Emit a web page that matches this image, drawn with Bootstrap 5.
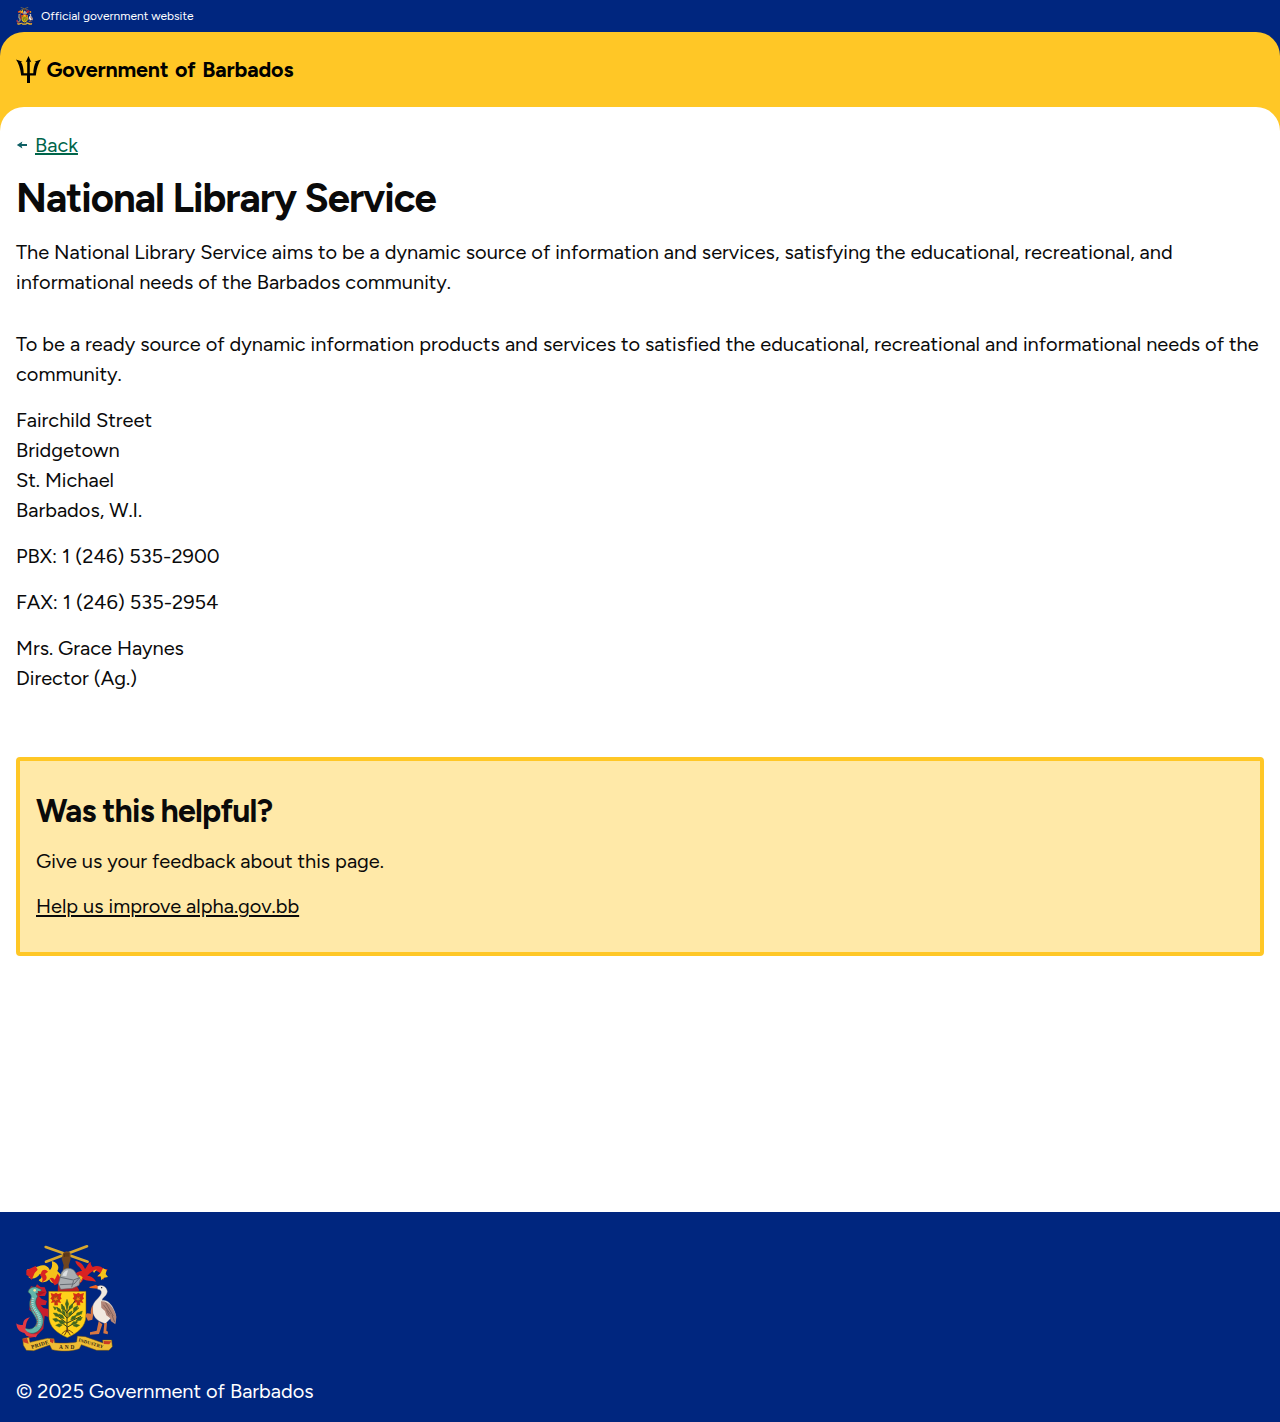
<!DOCTYPE html>
<html lang="en">
<head>
<meta charset="utf-8">
<meta name="viewport" content="width=device-width, initial-scale=1">
<title>National Library Service</title>
<link href="https://cdn.jsdelivr.net/npm/bootstrap@5.3.0/dist/css/bootstrap.min.css" rel="stylesheet">
<style>
body{font-family:Figtree,Lato,sans-serif;font-size:20px;line-height:30px;color:#0a0a0a;background:#fff}
.official-bar{background:#00267f;height:32px;font-size:12px;line-height:16px;gap:8px}
.blue-back{background:#00267f}
.yellow-back{background:#ffc726}
.brand-bar{background:#ffc726;height:75px;border-radius:24px 24px 0 0;font-size:21.5px;font-weight:700;letter-spacing:-.15px;word-spacing:1.6px;color:#000;gap:5.5px}
.sheet{background:#fff;border-radius:24px 24px 0 0;padding-top:23px;height:1105px}
.back-row{gap:8px;height:30px}
.back-row a{color:#00654a;text-underline-offset:1px;text-decoration-thickness:2px}
h1{font-size:40px;line-height:46px;font-weight:700;letter-spacing:-.025em;margin:15px 0 16px}
.summary{margin-bottom:32px}
.helpful{margin-top:64px;border:4px solid #ffc726;border-radius:4px;background:#ffe9a8;height:199px;padding:30px 16px}
.helpful h2{font-size:32px;line-height:40px;font-weight:700;letter-spacing:-.025em;margin-bottom:15px}
.helpful p{margin-bottom:15px}
.helpful a{color:#0a0a0a;text-underline-offset:2px;text-decoration-thickness:2px}
.site-foot{background:#00267f;height:210px;padding-top:32px}
.site-foot p{margin:24px 0 0}
</style>
</head>
<body>
<svg width="0" height="0" class="position-absolute" aria-hidden="true">
<symbol id="arms" viewBox="18 24 303 324">
  <g stroke="#d9a82e" stroke-width="8" stroke-linecap="round"><path d="M107 33 233 77"/><path d="M231 31 108 77"/></g>
  <path d="M160 50q10-9 21 0l1 20-6 18 4 30h-24l5-30-6-20z" fill="#70451f"/><path d="M163 53v10m5-12v11m6-11v11" stroke="#3c2612" stroke-width="2"/>
  <path d="M149 134C137 148 121 142 118 130 108 141 92 142 86 132 96 128 98 119 90 113 82 126 66 133 55 123 67 115 56 106 51 99 66 102 74 94 86 91 101 83 116 91 119 102 126 98 128 87 125 75 142 79 150 92 142 105L153 116z" fill="#f5c21a"/>
  <path d="M49 103 77 90 83 101 74 111 65 132 56 121 49 117zM96 104q11-6 18 3l-9 7q8 8 3 17l-13 9q7-16-5-22zM119 127q10-5 15 4l9-18 9 13q-4 18-18 22z" fill="#d92222"/>
  <path d="M186 130C188 115 204 104 216 105 210 91 198 89 196 75 212 76 221 89 225 99 233 92 232 82 242 78 242 94 254 97 261 98 249 105 240 108 232 120 243 119 253 127 258 137 243 134 229 135 220 130 213 145 198 151 183 145z" fill="#d92222"/>
  <path d="M239 102C249 86 270 86 283 100L293 99 285 113 281 132 274 121 262 122 271 112C261 101 251 102 239 111z" fill="#d92222"/>
  <path d="M279 97 290 102 287 114 294 123 282 125 274 133 272 121 262 121 272 111zM197 126l12-9 9 7-6 13-9 4zM249 105l11-5-8 11z" fill="#f5c21a"/>
  <path d="M144 142q14 16 52 1l12 20-10 10h-55z" fill="#be1f22"/>
  <path d="M151 123q2-22 20-26 21-2 28 18l12 15-4 18-20 9-35 3-7-17z" fill="#aaaeb1" stroke="#65696d" stroke-width="2"/>
  <path d="M151 124l39 8 19-7-17 19-42 2m41-13-6 21" fill="none" stroke="#666c72" stroke-width="3"/><path d="M157 119q4-14 17-16l-5 18z" fill="#dce0e2"/>
  <path d="M116 166H228V239C228 272 202 292 172 305 141 292 116 272 116 239z" fill="#ffd11a" stroke="#6c4e13" stroke-width="1.5"/>
  <g id="bloom"><path d="M122 171l10 3 6-4 6 4 11-3-3 11 3 6-6 4 4 9-10-2 1 9h-11v-9l-10 2 4-9-6-4 4-6z" fill="#d62d16"/><path d="M132 179l5 6 7-6-2 9 6 4-9 1-1 6-4-7-7-1 6-4zM137 199v8" stroke="#8d4a12" stroke-width="2" fill="#f07e12"/></g>
  <use href="#bloom" x="67"/>
  <path d="M171 198v88m0-14-24-18m24 8-36-28m36 12-30-32m30 18-16-28m16 70 30-17m-30 4 42-20m-42 6 36-32m-36 15 24-36" fill="none" stroke="#36401a" stroke-width="3"/>
  <path d="M171 190l5 14-5 14-5-14zM154 206l9 6 1 12-9-5zM187 203l1 11-11 8v-10zM140 214l10 5 4 11-11-5zM203 209l-2 11-11 7 1-11zM130 231l11 1 8 8-12 1zM214 227l-4 9-13 4 4-9zM146 234l12 4 5 10-12-3zM199 238l-4 10-13 4 4-10zM128 249l11-2 9 7-12 3zM217 244l-5 9-14 2 6-9zM145 254l12-1 8 8-12 3zM203 257l-7 8-13 1 7-9zM137 268l10-5 10 4-9 6zM209 268l-9 5-11-4 10-5zM157 222l8 6 1 11-9-6zM186 225l-1 10-9 6v-10zM135 222l-5-10 9 3zM205 231l12-6-3 10z" fill="#41661f" stroke="#41661f" stroke-width="1.5"/>
  <path d="M172 274v15m0-6q-9 1-17 11m17-12-9 16m9-15 9 15m-9-17q8 2 18 11" stroke="#6c3c15" stroke-width="3" fill="none"/>
  <path d="M56 165 63 151 76 154 81 145 92 153 104 154 110 169 105 180 87 180 95 189 111 195 107 207 92 208 100 216 115 219 115 243 104 239 100 278 77 302 54 307 60 285 79 280 87 258 75 235 58 222 60 199 69 181z" fill="#c91f2d"/>
  <path d="M54 168Q58 152 77 153L95 161 89 171 78 172 83 181C73 197 77 210 88 225 103 244 104 265 88 282 75 296 57 294 44 285L41 273C58 285 72 278 79 264 87 246 57 228 59 203 59 187 72 181 54 168z" fill="#62b5a9" stroke="#285a5d" stroke-width="2"/>
  <path d="M70 186q-8 19 8 39 19 26 8 46" fill="none" stroke="#b1d9d1" stroke-width="7" stroke-dasharray="3 3"/>
  <path d="M64 189q-7 17 8 38 18 26 5 46" fill="none" stroke="#c13c43" stroke-width="3" stroke-dasharray="4 3"/>
  <path d="M46 281C49 263 49 255 60 244 46 247 39 254 39 266 31 268 23 266 19 262 20 279 28 288 43 291L50 300 78 304 82 293C66 298 57 292 46 281z" fill="#e23842"/>
  <circle cx="74" cy="163" r="4" fill="#f7e59c"/><path d="M83 165 107 168 87 179z" fill="#a91422"/>
  <path d="M238 153 257 147 269 152 265 158 239 156z" fill="#f3641e"/>
  <path d="M263 151C276 143 291 153 292 167 290 181 278 183 276 193 290 190 305 203 312 222 320 238 318 250 315 261L302 247 286 263 268 256C248 244 244 222 250 205 254 193 276 180 274 167 272 161 267 161 263 160z" fill="#f1e9df" stroke="#9b8d83" stroke-width="1"/>
  <path d="M273 196C295 194 311 214 319 242L316 265 303 256 300 246 289 238 285 225 274 215z" fill="#b48678"/>
  <path d="M280 206l22 29m-15-35 23 40m-20-17 8 16m8-1 8 20" stroke="#69534d" stroke-width="2"/><circle cx="275" cy="155" r="2"/>
  <path d="M248 207q-8 14-5 26l-12-1-5 6 8 16 13-3 2-12zM266 256l-6 28-20 5v7l27-2 10-29zM283 261l-3 31 13 3 1-8-5-3 2-23z" fill="#d67742"/>
  <path d="M38 308 57 304 60 319 112 307 132 308 134 320C152 322 182 322 200 318L202 300 226 302 279 321 278 312 305 312 307 332 297 343 260 343 214 326 208 338C186 347 151 347 126 341L119 327 71 344 49 343 40 328z" fill="#efbd35" stroke="#735011" stroke-width="1.5"/>
  <path d="M38 309l13-3 5 17-16-4zm243 6 23 1-6 9-17-1zM120 309l12 1-3 12-9-5z" fill="#c83a25"/>
</symbol>
</svg>
<div class="official-bar d-flex align-items-center px-3 text-white"><svg width="17" height="18"><use href="#arms"/></svg><span>Official government website</span></div>
<div class="blue-back"><header class="brand-bar d-flex align-items-center px-3">
<svg width="25" height="28" viewBox="0 0 25 28"><path d="M12.5 0 15.3 6.2 13.8 5.6V17.2H17.3C17.4 12.5 18.2 9 20 6L18.4 5.8 25 3.5C22.4 7 20.6 12.5 19.8 19.5H14V27H11V19.5H5.2C4.4 12.5 2.6 7 0 3.5L6.6 5.8 5 6C6.8 9 7.6 12.5 7.7 17.2H11.2V5.6L9.7 6.2z"/></svg>
<span>Government of Barbados</span></header></div>
<div class="yellow-back"><main class="sheet px-3">
<div class="back-row d-flex align-items-center"><svg width="11" height="10" viewBox="0 0 11 10"><path d="M.8 5 6.4 1.5 5.6 4H11V6H5.6L6.4 8.5z" fill="#0e5f64"/></svg><a href="#">Back</a></div>
<h1>National Library Service</h1>
<p class="summary">The National Library Service aims to be a dynamic source of information and services, satisfying the educational, recreational, and informational needs of the Barbados community.</p>
<p>To be a ready source of dynamic information products and services to satisfied the educational, recreational and informational needs of the community.</p>
<p>Fairchild Street<br>Bridgetown<br>St. Michael<br>Barbados, W.I.</p>
<p>PBX: 1 (246) 535-2900</p>
<p>FAX: 1 (246) 535-2954</p>
<p>Mrs. Grace Haynes<br>Director (Ag.)</p>
<section class="helpful"><h2>Was this helpful?</h2><p>Give us your feedback about this page.</p><a href="#">Help us improve alpha.gov.bb</a></section>
</main></div>
<footer class="site-foot px-3 text-white">
<svg class="d-block" width="101" height="108" viewBox="18 24 303 324"><use href="#arms" x="18" y="24" width="303" height="324"/>
<g font-family="Liberation Serif, serif" font-weight="700" fill="#2e2412" font-size="16"><text transform="translate(65 338) rotate(-16)" textLength="54">PRIDE</text><text x="147" y="339" textLength="46">AND</text><text transform="translate(205 316) rotate(16)" textLength="76" font-size="14">INDUSTRY</text></g></svg>
<p>© 2025 Government of Barbados</p></footer>
<script src="https://cdn.jsdelivr.net/npm/bootstrap@5.3.0/dist/js/bootstrap.bundle.min.js"></script>
</body>
</html>
